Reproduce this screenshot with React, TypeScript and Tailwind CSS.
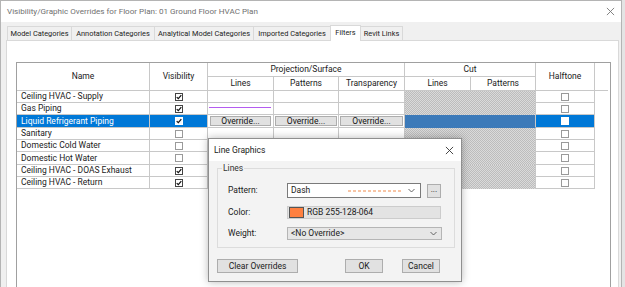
import React from "react";

type Row = { name: string; vis: boolean; h: string; sel?: boolean; line?: boolean };

const rows: Row[] = [
  { name: "Ceiling HVAC - Supply", vis: true, h: "h-[12px]" },
  { name: "Gas Piping", vis: true, h: "h-[12px]", line: true },
  { name: "Liquid Refrigerant Piping", vis: true, h: "h-[13px]", sel: true },
  { name: "Sanitary", vis: false, h: "h-[12px]" },
  { name: "Domestic Cold Water", vis: false, h: "h-[12px]" },
  { name: "Domestic Hot Water", vis: false, h: "h-[13px]" },
  { name: "Ceiling HVAC - DOAS Exhaust", vis: true, h: "h-[12px]" },
  { name: "Ceiling HVAC - Return", vis: true, h: "h-[12px]" },
];

const pattern =
  "bg-[#cacaca] bg-[image:repeating-conic-gradient(#bcbcbc_0_25%,#dadada_0_50%)] bg-[length:2px_2px]";

function Check({ checked, sel }: { checked: boolean; sel?: boolean }) {
  return (
    <div
      className={`w-[8px] h-[8px] border flex items-center justify-center ${
        sel ? "border-white bg-[#f4f8fc]" : checked ? "border-[#444] bg-white" : "border-[#9a9a9a] bg-white"
      }`}
    >
      {checked && (
        <svg width="6" height="6" viewBox="0 0 6 6">
          <path d="M0.7 3.1 L2.3 4.7 L5.3 1.1" stroke="#111" strokeWidth="1.2" fill="none" />
        </svg>
      )}
    </div>
  );
}

function XIcon({ color, size }: { color: string; size: number }) {
  return (
    <svg width={size} height={size} viewBox="0 0 10 10">
      <path d="M1 1 L9 9 M9 1 L1 9" stroke={color} strokeWidth="1" fill="none" />
    </svg>
  );
}

function Chevron() {
  return (
    <svg width="7" height="5" viewBox="0 0 7 5">
      <path d="M0.5 1 L3.5 4 L6.5 1" stroke="#555" strokeWidth="0.9" fill="none" />
    </svg>
  );
}

function OverrideBtn() {
  return (
    <div className="w-full h-full p-[1px] bg-white">
      <div className="w-full h-full bg-[#e1e1e1] border border-[#adadad] flex items-center justify-center text-[#111] leading-none">
        Override...
      </div>
    </div>
  );
}

const cell = "border-r border-b border-[#c8c8c8]";

function DataRow({ r }: { r: Row }) {
  const sel = r.sel;
  return (
    <div className={`flex ${r.h}`}>
      <div
        className={`w-[133px] ${cell} flex items-center pl-[4px] leading-none whitespace-nowrap ${
          sel ? "bg-[#0078d7] text-white" : "text-[#1a1a1a]"
        }`}
      >
        {r.name}
      </div>
      <div className={`w-[58px] ${cell} flex items-center justify-center ${sel ? "bg-[#0078d7]" : ""}`}>
        <Check checked={r.vis} sel={sel} />
      </div>
      <div className={`w-[66px] ${cell} flex items-center px-[1px]`}>
        {sel ? (
          <OverrideBtn />
        ) : r.line ? (
          <div className="w-[62px] h-0 border-t border-[#b45cf0] -mt-[2px]" />
        ) : null}
      </div>
      <div className={`w-[65px] ${cell}`}>{sel ? <OverrideBtn /> : null}</div>
      <div className={`w-[66px] ${cell}`}>{sel ? <OverrideBtn /> : null}</div>
      <div className={`w-[66px] border-r border-b ${sel ? "bg-[#3c7ab9] border-[#3c7ab9]" : `${pattern} border-transparent`}`} />
      <div className={`w-[65px] border-r border-b ${sel ? "bg-[#3c7ab9] border-r-[#c8c8c8] border-b-[#3c7ab9]" : `${pattern} border-r-[#c8c8c8] border-b-transparent`}`} />
      <div className={`w-[59px] ${cell} flex items-center justify-center ${sel ? "bg-[#0078d7]" : ""}`}>
        {sel ? <div className="w-[8px] h-[8px] bg-white border border-white" /> : <Check checked={false} />}
      </div>
    </div>
  );
}

function Tab({ label, w, active }: { label: string; w: string; active?: boolean }) {
  return (
    <div
      className={`${w} flex items-center justify-center border border-b-0 border-[#d9d9d9] -ml-[1px] first:ml-0 leading-none whitespace-nowrap text-[#222] ${
        active ? "h-[16px] bg-white relative z-10 -mb-[1px] pb-[1px]" : "h-[14px] bg-[#f0f0f0]"
      }`}
    >
      {label}
    </div>
  );
}

export default function App() {
  return (
    <div className="relative w-[625px] h-[287px] overflow-hidden bg-[#e4e4e4] font-['Roboto',sans-serif] text-[8.5px]">
      <div className="w-[622px] h-[287px] bg-[#f0f0f0] border-l border-t border-r border-[#b4b4b4] flex flex-col">
        {/* title bar */}
        <div className="h-[21px] bg-white flex items-center pl-[6px] pr-[6px] shrink-0">
          <span className="text-[#707070] leading-none text-[8.1px]">
            Visibility/Graphic Overrides for Floor Plan: 01 Ground Floor HVAC Plan
          </span>
          <div className="ml-auto mr-[0px]">
            <XIcon color="#777" size={9} />
          </div>
        </div>
        {/* tabs */}
        <div className="pl-[5px] mt-[4px] flex flex-col">
          <div className="flex items-end h-[14px] pl-[1px] text-[7.4px]">
            <Tab label="Model Categories" w="w-[65px]" />
            <Tab label="Annotation Categories" w="w-[84px]" />
            <Tab label="Analytical Model Categories" w="w-[100px]" />
            <Tab label="Imported Categories" w="w-[78px]" />
            <Tab label="Filters" w="w-[31px]" active />
            <Tab label="Revit Links" w="w-[43px]" />
          </div>
          <div className="w-[613px] h-[260px] bg-white border border-[#d9d9d9] pl-[9px] pt-[21px]">
            <div className="w-[595px] h-[240px] border-l border-t border-r border-[#a0a0a0] bg-white">
              {/* header */}
              <div className="flex h-[28px] text-[#1a1a1a] leading-none">
                <div className={`w-[133px] h-[28px] ${cell} flex items-center justify-center`}>Name</div>
                <div className={`w-[58px] h-[28px] ${cell} flex items-center justify-center`}>Visibility</div>
                <div className="w-[197px] flex flex-col">
                  <div className={`h-[14px] ${cell} flex items-center justify-center`}>Projection/Surface</div>
                  <div className="flex h-[14px]">
                    <div className={`w-[66px] ${cell} flex items-center justify-center`}>Lines</div>
                    <div className={`w-[65px] ${cell} flex items-center justify-center`}>Patterns</div>
                    <div className={`w-[66px] ${cell} flex items-center justify-center`}>Transparency</div>
                  </div>
                </div>
                <div className="w-[131px] flex flex-col">
                  <div className={`h-[14px] ${cell} flex items-center justify-center`}>Cut</div>
                  <div className="flex h-[14px]">
                    <div className={`w-[66px] ${cell} flex items-center justify-center`}>Lines</div>
                    <div className={`w-[65px] ${cell} flex items-center justify-center`}>Patterns</div>
                  </div>
                </div>
                <div className={`w-[59px] h-[28px] ${cell} flex items-center justify-center`}>Halftone</div>
                <div className="w-[13px] h-[28px] border-b border-[#c8c8c8]" />
              </div>
              {rows.map((r) => (
                <DataRow key={r.name} r={r} />
              ))}
            </div>
          </div>
        </div>
      </div>

      {/* Line Graphics dialog */}
      <div className="absolute left-[208px] top-[138px] w-[254px] border border-[#8f8f8f] bg-[#f3f3f3] shadow-[0_0_8px_rgba(0,0,0,0.28)] flex flex-col text-[#1a1a1a]">
        <div className="h-[22px] bg-white flex items-center pl-[5px] pr-[7px]">
          <span className="leading-none">Line Graphics</span>
          <div className="ml-auto">
            <XIcon color="#333" size={9} />
          </div>
        </div>
        <div className="relative ml-[8px] mr-[6px] mt-[7px] border border-[#dcdcdc] pt-[14px] pb-[7px] pl-[10px] flex flex-col">
          <span className="absolute -top-[5px] left-[4px] px-[1px] bg-[#f3f3f3] leading-none text-[#333]">Lines</span>
          <div className="flex items-center h-[15px]">
            <span className="w-[59px] leading-none">Pattern:</span>
            <div className="w-[134px] h-[15px] bg-white border border-[#7a7a7a] flex items-center pl-[3px] pr-[5px]">
              <span className="leading-none">Dash</span>
              <svg className="ml-auto mr-[7px]" width="53" height="2" viewBox="0 0 53 2">
                <line x1="0" y1="1" x2="53" y2="1" stroke="#f08a4b" strokeWidth="1" strokeDasharray="3 2" />
              </svg>
              <Chevron />
            </div>
            <div className="ml-[6px] w-[14px] h-[14px] bg-[#e1e1e1] border border-[#adadad] flex items-center justify-center leading-none pb-[3px]">
              ...
            </div>
          </div>
          <div className="flex items-center h-[13px] mt-[8px]">
            <span className="w-[59px] leading-none">Color:</span>
            <div className="w-[154px] h-[13px] bg-[#e3e3e3] border border-[#cccccc] flex items-center pl-[1px]">
              <div className="w-[15px] h-[11px] bg-[#ff8040] border border-[#555]" />
              <span className="ml-[3px] leading-none">RGB 255-128-064</span>
            </div>
          </div>
          <div className="flex items-center h-[13px] mt-[8px]">
            <span className="w-[59px] leading-none">Weight:</span>
            <div className="w-[155px] h-[13px] bg-[#e6e6e6] border border-[#b5b5b5] flex items-center pl-[3px] pr-[4px]">
              <span className="leading-none">&lt;No Override&gt;</span>
              <div className="ml-auto">
                <Chevron />
              </div>
            </div>
          </div>
        </div>
        <div className="flex items-center mt-[11px] mb-[8px] ml-[8px] mr-[21px]">
          <div className="w-[81px] h-[14px] bg-[#e1e1e1] border border-[#adadad] flex items-center justify-center leading-none">
            Clear Overrides
          </div>
          <div className="ml-auto w-[38px] h-[14px] bg-[#e1e1e1] border border-[#adadad] flex items-center justify-center leading-none">
            OK
          </div>
          <div className="ml-[19px] w-[38px] h-[14px] bg-[#e1e1e1] border border-[#adadad] flex items-center justify-center leading-none">
            Cancel
          </div>
        </div>
      </div>
    </div>
  );
}
